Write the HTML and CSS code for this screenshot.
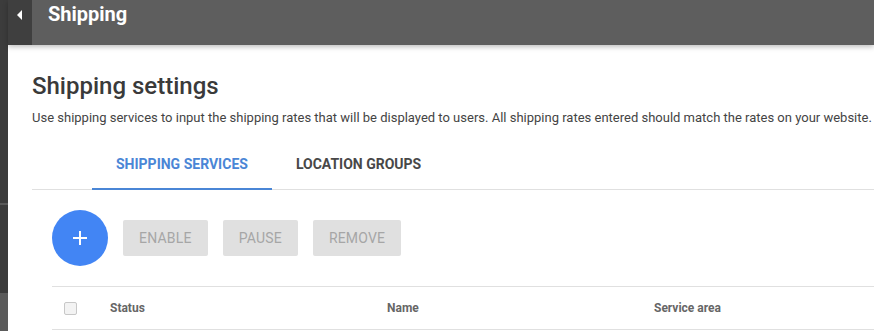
FILE: index.html
```html
<!DOCTYPE html>
<html lang="en">
<head>
    <meta charset="UTF-8">
    <meta name="viewport" content="width=device-width, initial-scale=1.0">
    <title>Shipping</title>
    <link rel="stylesheet" href="styles.css">
</head>
<body>
    <div class="rail">
        <div class="rail-top"></div>
        <div class="rail-mid"></div>
        <div class="rail-bottom"></div>
    </div>
    <div class="main">
        <header class="topbar">
            <button class="back" aria-label="Back">
                <svg width="6" height="10" viewBox="0 0 6 10"><path d="M5 0 L0 5 L5 10 Z" fill="#fff"/></svg>
            </button>
            <h1>Shipping</h1>
        </header>

        <div class="content">
            <h2>Shipping settings</h2>
            <p class="intro">Use shipping services to input the shipping rates that will be displayed to users. All shipping rates entered should match the rates on your website.</p>

            <div class="tabs">
                <div class="tab active">SHIPPING SERVICES</div>
                <div class="tab">LOCATION GROUPS</div>
            </div>

            <div class="toolbar">
                <button class="fab" aria-label="Add">
                    <svg width="16" height="16" viewBox="0 0 16 16"><path d="M8 1 V15 M1 8 H15" stroke="#fff" stroke-width="2"/></svg>
                </button>
                <button class="action">ENABLE</button>
                <button class="action">PAUSE</button>
                <button class="action">REMOVE</button>
            </div>

            <div class="table-head">
                <span class="check"></span>
                <span>Status</span>
                <span>Name</span>
                <span>Service area</span>
            </div>
        </div>
    </div>
</body>
</html>
```

FILE: styles.css
```css
body {
    margin: 0;
    font-family: Roboto, 'Liberation Sans', Arial, sans-serif;
    display: flex;
    height: 100vh;
    overflow: hidden;
    background: #fff;
}

.rail {
    width: 8px;
    flex-shrink: 0;
    display: flex;
    flex-direction: column;
    background: #3c3c3c;
}

.rail-top {
    height: 203px;
}

.rail-mid {
    height: 2px;
    background: #5a5a5a;
    margin-bottom: 88px;
}

.rail-bottom {
    flex: 1;
    background: #5b5b5b;
}

.main {
    flex: 1;
    min-width: 0;
}

.topbar {
    height: 45px;
    display: flex;
    align-items: stretch;
    background: #5e5e5e;
    box-shadow: 0 2px 5px rgba(0, 0, 0, 0.25);
    position: relative;
}

.back {
    width: 24px;
    border: none;
    padding: 0;
    background: #3f3f3f;
    display: flex;
    justify-content: center;
    align-items: flex-start;
    padding-top: 10px;
}

.topbar h1 {
    margin: 0 0 0 16px;
    color: #fff;
    font-size: 20px;
    font-weight: 700;
    line-height: 29px;
}

.content {
    padding: 0 0 0 24px;
}

.content h2 {
    margin: 25px 0 0;
    font-size: 24px;
    font-weight: 500;
    color: #3a3a3a;
    line-height: 32px;
}

.intro {
    margin: 7px 0 0;
    font-size: 13px;
    color: #444;
    line-height: 18px;
    white-space: nowrap;
}

.tabs {
    display: flex;
    padding-left: 60px;
    margin-top: 13px;
    border-bottom: 1px solid #e0e0e0;
}

.tab {
    padding: 0 24px;
    height: 48px;
    line-height: 48px;
    font-size: 14px;
    font-weight: 700;
    color: #484848;
    border-bottom: 2px solid transparent;
    margin-bottom: -1px;
}

.tab.active {
    color: #4a86d6;
    border-bottom-color: #4a86d6;
}

.toolbar {
    display: flex;
    align-items: center;
    gap: 15px;
    padding: 20px 0 20px 20px;
}

.fab {
    width: 56px;
    height: 56px;
    border-radius: 50%;
    border: none;
    background: #4285f4;
    display: flex;
    align-items: center;
    justify-content: center;
    padding: 0;
}

.action {
    height: 36px;
    padding: 0 16px;
    border: none;
    border-radius: 2px;
    background: #e0e0e0;
    color: #a6a6a6;
    font-family: Roboto, 'Liberation Sans', Arial, sans-serif;
    font-size: 14px;
    letter-spacing: 0.2px;
}

.table-head {
    margin-left: 20px;
    display: grid;
    grid-template-columns: 58px 277px 267px 1fr;
    align-items: center;
    height: 42px;
    border-top: 1px solid #e0e0e0;
    border-bottom: 1px solid #e0e0e0;
    font-size: 12px;
    font-weight: 700;
    color: #666;
}

.check {
    width: 11px;
    height: 11px;
    margin-left: 12px;
    border: 1px solid #c8c8c8;
    border-radius: 2px;
    background: #f3f3f3;
}
```
